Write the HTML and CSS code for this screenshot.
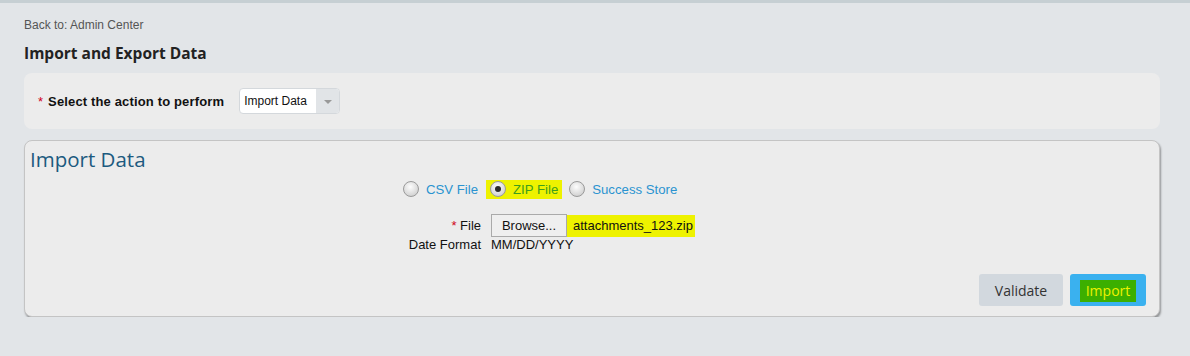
FILE: index.html
```html
<!DOCTYPE html>
<html lang="en">
<head>
  <meta charset="UTF-8">
  <title>Import and Export Data</title>
  <link rel="stylesheet" href="styles.css">
</head>
<body>
  <div class="topbar"></div>
  <div class="page">
    <a class="back" href="#">Back to: Admin Center</a>
    <h1>Import and Export Data</h1>

    <div class="action-bar">
      <span class="req">*</span>
      <label class="action-label">Select the action to perform</label>
      <div class="select">
        <span class="select-value">Import Data</span>
        <span class="select-arrow"><span class="caret"></span></span>
      </div>
    </div>

    <div class="panel">
      <h2>Import Data</h2>

      <div class="radios">
        <label class="radio"><span class="dot"></span><span class="radio-text">CSV File</span></label>
        <label class="radio hl"><span class="dot checked"></span><span class="radio-text">ZIP File</span></label>
        <label class="radio"><span class="dot"></span><span class="radio-text">Success Store</span></label>
      </div>

      <div class="fields">
        <div class="field-label"><span class="req">*</span> File</div>
        <div class="field-value">
          <button class="browse">Browse...</button>
          <span class="filename">attachments_123.zip</span>
        </div>
        <div class="field-label">Date Format</div>
        <div class="field-value">MM/DD/YYYY</div>
      </div>

      <div class="actions">
        <button class="btn btn-validate">Validate</button>
        <button class="btn btn-import"><span class="mark">Import</span></button>
      </div>
    </div>
  </div>
</body>
</html>
```

FILE: styles.css
```css
body {
  margin: 0;
  background: #e2e5e8;
  font-family: 'Liberation Sans', Arial, sans-serif;
  color: #333;
}
.topbar {
  height: 3px;
  background: #c6cfd3;
}
.page {
  padding: 15px 30px 0 24px;
}
.back {
  display: block;
  font-size: 12px;
  color: #555;
  text-decoration: none;
  line-height: 14px;
}
h1 {
  font-family: 'Open Sans', sans-serif;
  font-size: 15.5px;
  font-weight: bold;
  color: #222;
  margin: 11px 0 10px;
  line-height: 20px;
}
.req {
  color: #d0021b;
}
.action-bar {
  background: #ececec;
  border-radius: 8px;
  height: 56px;
  display: flex;
  align-items: center;
  padding-left: 14px;
}
.action-bar .req {
  font-size: 13px;
  margin-right: 5px;
}
.action-label {
  font-weight: bold;
  font-size: 13px;
  color: #111;
  margin-right: 15px;
  letter-spacing: 0.15px;
}
.select {
  display: flex;
  height: 24px;
  border: 1px solid #d4d8dc;
  border-radius: 4px;
  background: #fff;
  overflow: hidden;
}
.select-value {
  font-size: 12px;
  color: #111;
  line-height: 24px;
  padding: 0 8px 0 4px;
  width: 64px;
}
.select-arrow {
  width: 23px;
  background: #e1e4e7;
  display: flex;
  align-items: center;
  justify-content: center;
}
.caret {
  border-left: 4px solid transparent;
  border-right: 4px solid transparent;
  border-top: 4px solid #999;
  margin-top: 2px;
}
.panel {
  margin-top: 11px;
  background: #ececec;
  border: 1px solid #c4c4c4;
  border-radius: 8px;
  box-shadow: 1px 2px 2px rgba(0,0,0,0.35);
  height: 175px;
  position: relative;
}
h2 {
  font-family: 'Open Sans', sans-serif;
  font-weight: normal;
  font-size: 20.5px;
  color: #1c5a7f;
  margin: 5px 0 0 5px;
  line-height: 26px;
}
.radios {
  display: flex;
  margin: 7px 0 0 378px;
  height: 20px;
  align-items: center;
}
.radio {
  display: flex;
  align-items: center;
  height: 19px;
  font-size: 13.2px;
  color: #2a93d0;
  margin-right: 8px;
}
.radio.hl {
  background: #eef200;
  padding: 0 4px 0 4px;
  margin-right: 7px;
}
.radio.hl .radio-text {
  color: #3d9e1c;
}
.dot {
  width: 14px;
  height: 14px;
  border-radius: 50%;
  border: 1px solid #9a9a9a;
  background: radial-gradient(circle at 45% 35%, #fdfdfd, #d6d6d6 70%, #c0c0c0);
  margin-right: 7px;
  position: relative;
}
.dot.checked::after {
  content: '';
  position: absolute;
  left: 4px;
  top: 4px;
  width: 6px;
  height: 6px;
  border-radius: 50%;
  background: #2b2b2b;
}
.fields {
  display: grid;
  grid-template-columns: 456px auto;
  column-gap: 10px;
  margin-top: 15px;
  font-size: 13px;
  color: #111;
}
.field-label {
  text-align: right;
  line-height: 16px;
  align-self: center;
}
.field-value {
  display: flex;
  align-items: center;
  line-height: 16px;
}
.browse {
  font-family: 'Liberation Sans', Arial, sans-serif;
  font-size: 13px;
  color: #111;
  background: #efefef;
  border: 1px solid #aaa;
  height: 23px;
  width: 76px;
  padding: 0;
}
.filename {
  background: #eef200;
  padding: 3px 2px 3px 6px;
  line-height: 16px;
}
.actions {
  position: absolute;
  right: 13px;
  bottom: 10px;
  display: flex;
  gap: 7px;
}
.btn {
  font-family: 'Open Sans', sans-serif;
  font-size: 14px;
  height: 32px;
  border: none;
  border-radius: 3px;
  cursor: pointer;
}
.btn-validate {
  width: 84px;
  background: #d2d8de;
  color: #333;
}
.btn-import {
  width: 76px;
  background: #3ab1ef;
  color: #eef200;
}
.btn-import .mark {
  background: #3caf00;
  padding: 1px 6px 2px;
}
```
